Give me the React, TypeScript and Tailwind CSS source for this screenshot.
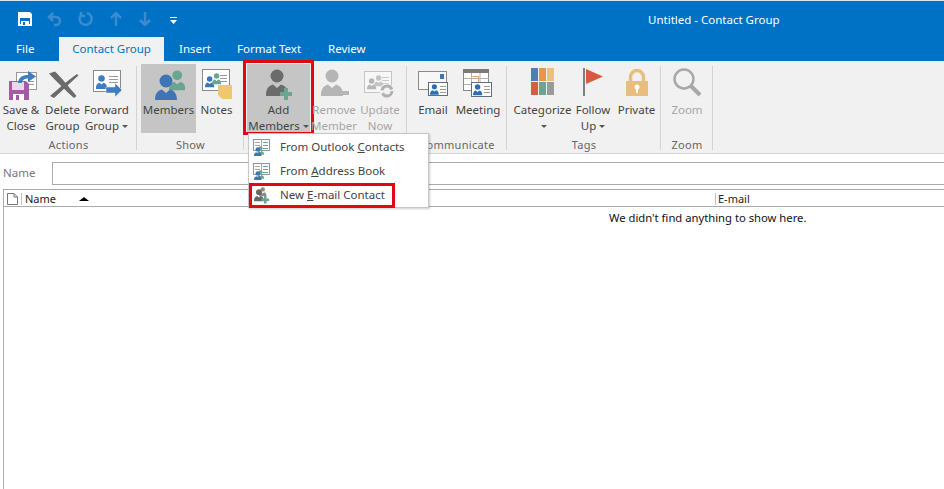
import type { ReactNode } from "react"

const font = { fontFamily: '"Noto Sans", "Open Sans", sans-serif' }

// head + shoulders in a box of 22x27
function Person({ x, y, s = 1, color }: { x: number; y: number; s?: number; color: string }) {
  return (
    <g transform={`translate(${x} ${y}) scale(${s})`} fill={color}>
      <circle cx="11" cy="7" r="6.5" />
      <path d="M0 27 C0 20 2 17 7 15.5 L11 19 L15 15.5 C20 17 22 20 22 27 Z" />
    </g>
  )
}

function Lines({ x, y, w, n = 3, color = "#9a9a9a" }: { x: number; y: number; w: number; n?: number; color?: string }) {
  return (
    <>
      {Array.from({ length: n }).map((_, i) => (
        <rect key={i} x={x} y={y + i * 3} width={w} height="1" fill={color} />
      ))}
    </>
  )
}

function Svg({ children }: { children: ReactNode }) {
  return (
    <svg width="32" height="32" viewBox="0 0 32 32" className="shrink-0">
      {children}
    </svg>
  )
}

const SaveClose = () => (
  <Svg>
    <rect x="13.5" y="4.5" width="20" height="17" fill="#fff" stroke="#9a9a9a" transform="translate(-2 0)" />
    <Lines x={23} y={13} w={6} n={2} />
    <path d="M4 13 H21 L24 16 V32 H4 Z" fill="#a45ca8" />
    <rect x="7" y="14" width="12" height="8" fill="#e9d8ea" />
    <rect x="8" y="26" width="11" height="6" fill="#fff" />
    <rect x="11" y="27" width="3" height="5" fill="#a45ca8" />
    <path d="M13 15 C13.5 9 18 7 23 7 V3 L31 8.5 L23 14 V10.5 C20 10.5 17.5 11.5 17 15 Z" fill="#3f7cc0" />
  </Svg>
)

const DeleteX = () => (
  <Svg>
    <path d="M2 5.5 L8 3.5 C14 9 22 19 29.5 28 L27 30 C20 24 9 13 2 5.5 Z" fill="#6b6b6b" />
    <path d="M30 6 L31.5 7.5 C24 14 15 23 7 30 L3 28 C10 22 21 12 30 6 Z" fill="#6b6b6b" />
  </Svg>
)

const Forward = () => (
  <Svg>
    <rect x="2.5" y="2.5" width="27" height="21" fill="#fff" stroke="#8a8a8a" />
    <Person x={5} y={7} s={0.5} color="#3f7cc0" />
    <rect x="5" y="18" width="11" height="3" fill="#3f7cc0" />
    <Lines x={18} y={8} w={9} />
    <path d="M15 19 H24 V15 L31 22 L24 29 V25 H15 Z" fill="#3f7cc0" stroke="#f1f1f1" strokeWidth="0.5" />
  </Svg>
)

const Members = () => (
  <Svg>
    <Person x={16} y={2} s={0.75} color="#6aa58f" />
    <Person x={2} y={6} s={1} color="#3f74b5" />
  </Svg>
)

const Notes = () => (
  <Svg>
    <rect x="1.5" y="1.5" width="27" height="21" fill="#fff" stroke="#8a8a8a" />
    <Person x={4} y={8} s={0.42} color="#3f74b5" />
    <Person x={11} y={5} s={0.42} color="#6aa58f" />
    <Lines x={19} y={7} w={7} />
    <path d="M17 17 H31 V31 H21 L17 27 Z" fill="#efc76e" />
  </Svg>
)

const AddMember = () => (
  <Svg>
    <Person x={3} y={1} color="#6b6b6b" />
    <path d="M21 20 H25 V24 H29 V28 H25 V32 H21 V28 H17 V24 H21 Z" fill="#6aa58f" />
  </Svg>
)

const RemoveMember = () => (
  <Svg>
    <Person x={3} y={1} color="#b5b5b5" />
    <rect x="17" y="23" width="14" height="4" fill="#b5b5b5" />
  </Svg>
)

const UpdateNow = () => (
  <Svg>
    <rect x="0.5" y="3.5" width="27" height="21" fill="#f7f7f7" stroke="#c4c4c4" />
    <Person x={3} y={10} s={0.42} color="#b5b5b5" />
    <Person x={10} y={7} s={0.42} color="#c4c4c4" />
    <Lines x={18} y={9} w={7} color="#c9c9c9" />
    <circle cx="23" cy="23" r="7.5" fill="#f1f1f1" />
    <circle cx="23" cy="23" r="5" fill="none" stroke="#b0b0b0" strokeWidth="3" strokeDasharray="13 3" />
  </Svg>
)

const Email = () => (
  <Svg>
    <rect x="1.5" y="3.5" width="28" height="18" fill="#f7f7f7" stroke="#8a8a8a" />
    <rect x="23" y="6" width="4" height="5" fill="#3f74b5" />
    <rect x="11.5" y="14.5" width="19" height="13" fill="#fff" stroke="#5f6f80" />
    <Person x={13} y={16} s={0.4} color="#2f6db0" />
    <Lines x={23} y={18} w={6} />
  </Svg>
)

const Meeting = () => (
  <Svg>
    <rect x="1.5" y="1.5" width="25" height="21" fill="#fff" stroke="#8a8a8a" />
    <rect x="1" y="1" width="26" height="4" fill="#7a7a7a" />
    <path d="M9.5 5 V22 M18 5 V14 M2 10.5 H27 M2 16.5 H9" stroke="#b0b0b0" fill="none" />
    <rect x="9.5" y="8.5" width="7" height="6" fill="none" stroke="#e8a56f" />
    <rect x="9.5" y="14.5" width="20" height="14" fill="#fff" stroke="#5f6f80" />
    <Person x={11} y={16} s={0.42} color="#2f6db0" />
    <Lines x={22} y={18} w={6} />
  </Svg>
)

const Categorize = () => (
  <Svg>
    <rect x="4" y="0" width="7" height="13" fill="#4c7fb8" />
    <rect x="12" y="0" width="7" height="13" fill="#e8964b" />
    <rect x="20" y="0" width="7" height="13" fill="#e9c27d" />
    <rect x="4" y="14" width="7" height="13" fill="#d85c44" />
    <rect x="12" y="14" width="7" height="13" fill="#6aa58f" />
    <rect x="20" y="14" width="7" height="13" fill="#9a9a9a" />
  </Svg>
)

const Flag = () => (
  <Svg>
    <rect x="6" y="0" width="2" height="28" fill="#7f7f7f" />
    <path d="M9 1 L26 8.5 L9 16 Z" fill="#d95b3f" />
  </Svg>
)

const Lock = () => (
  <Svg>
    <path d="M9.5 14 V9 a6.5 6.5 0 0 1 13 0 V14" fill="none" stroke="#e9bd7c" strokeWidth="3.5" />
    <path d="M5 13 H27 V28 H5 Z" fill="#e9bd7c" />
    <circle cx="16" cy="19" r="2.5" fill="#fff" />
    <rect x="15" y="20" width="2" height="5" fill="#fff" />
  </Svg>
)

const Magnifier = () => (
  <Svg>
    <circle cx="13" cy="11" r="9.5" fill="none" stroke="#a8a8a8" strokeWidth="2.5" />
    <path d="M20 18 L29 27" stroke="#a8a8a8" strokeWidth="4" />
  </Svg>
)

function Caret() {
  return <span className="inline-block ml-[3px] align-middle w-0 h-0 border-x-[3px] border-x-transparent border-t-[3px] border-t-[#555]" />
}

function RibbonButton({
  icon,
  lines,
  width,
  caret,
  caretBelow,
  disabled,
  active,
  marked,
}: {
  icon: ReactNode
  lines: string[]
  width: string
  caret?: boolean
  caretBelow?: boolean
  disabled?: boolean
  active?: boolean
  marked?: boolean
}) {
  return (
    <div
      className={`relative shrink-0 h-[69px] flex flex-col items-center pt-[4px] text-[11.5px] leading-[16px] ${width} ${
        active ? "bg-[#c5c5c5]" : ""
      } ${disabled ? "text-[#a6a6a6]" : "text-[#444]"}`}
    >
      {icon}
      <div className="mt-[2px] text-center whitespace-nowrap">
        {lines.map((l, i) => (
          <div key={i}>
            {l}
            {caret && i === lines.length - 1 && <Caret />}
          </div>
        ))}
        {caretBelow && (
          <div>
            <Caret />
          </div>
        )}
      </div>
      {marked && <div className="absolute -inset-x-[4px] -top-[4px] -bottom-[2px] border-[3px] border-[#e30613]" />}
    </div>
  )
}

function Group({ label, width, pad, children }: { label: string; width: string; pad: string; children: ReactNode }) {
  return (
    <div className={`relative shrink-0 h-full ${width}`}>
      <div className={`flex pt-[3px] ${pad}`}>{children}</div>
      <div className="absolute inset-x-0 top-[76px] text-center text-[11px] leading-[16px] tracking-[0.3px] text-[#666]">{label}</div>
      <div className="absolute right-0 top-[5px] bottom-[3px] w-px bg-[#d4d4d4]" />
    </div>
  )
}

function MenuItem({ icon, before, u, after, marked }: { icon: ReactNode; before: string; u: string; after: string; marked?: boolean }) {
  return (
    <div className="relative h-[24px] flex items-center text-[11.5px] text-[#444] whitespace-nowrap">
      <div className="w-[31px] pl-[4px] shrink-0">{icon}</div>
      <span>
        {before}
        <span className="underline">{u}</span>
        {after}
      </span>
      {marked && <div className="absolute left-0 top-0 -bottom-px w-[146px] border-[3px] border-[#e30613]" />}
    </div>
  )
}

const BookIcon = () => (
  <svg width="18" height="18" viewBox="0 0 18 18" className="block">
    <rect x="0.5" y="1.5" width="16" height="11" fill="#fff" stroke="#8a9aa5" />
    <path d="M8.5 2 V12" stroke="#a0b0b8" />
    <Lines x={2} y={4} w={5} color="#c79a8a" n={2} />
    <Lines x={10} y={4} w={5} color="#6aa58f" />
    <Person x={4} y={8} s={0.32} color="#6aa58f" />
    <Person x={1} y={9} s={0.34} color="#3f74b5" />
  </svg>
)

const NewContactIcon = () => (
  <svg width="18" height="18" viewBox="0 0 18 18" className="block">
    <Person x={6} y={1} s={0.34} color="#8a8a8a" />
    <Person x={1} y={3} s={0.45} color="#666" />
    <path d="M11 10 H13.5 V12.5 H16 V15 H13.5 V17.5 H11 V15 H8.5 V12.5 H11 Z" fill="#6aa58f" />
  </svg>
)

const qatDim = "#3b8ccf"

export default function App() {
  return (
    <div className="w-[944px] h-[489px] overflow-hidden bg-white" style={font}>
      {/* title bar */}
      <div className="h-[37px] bg-[#0072c6] border-t border-[#dbe8f3] flex items-center relative">
        <div className="flex items-center pl-[17px] gap-[13px]">
          <svg width="16" height="16" viewBox="0 0 16 16">
            <path d="M2 2 H12.5 L14 3.5 V14 H2 Z" fill="none" stroke="#fff" strokeWidth="2" />
            <rect x="2" y="2" width="12" height="5" fill="#fff" />
            <rect x="4" y="10" width="8" height="4" fill="#fff" />
            <rect x="6" y="11" width="2" height="3" fill="#0072c6" />
          </svg>
          <svg width="17" height="16" viewBox="0 0 17 16" fill="none" stroke={qatDim} strokeWidth="2.5">
            <path d="M7 2 L3 6 L7 10 M3 6 H10 A4 4 0 0 1 10 14 H8" />
          </svg>
          <svg width="16" height="16" viewBox="0 0 16 16" fill="none" stroke={qatDim} strokeWidth="2.5" className="ml-[1px]">
            <path d="M10 2 A6 6 0 1 1 4 4 M4 1 V5 H8" />
          </svg>
          <svg width="12" height="14" viewBox="0 0 12 14" fill="none" stroke={qatDim} strokeWidth="2.5" className="ml-[4px]">
            <path d="M6 14 V2 M1 6 L6 1 L11 6" />
          </svg>
          <svg width="12" height="14" viewBox="0 0 12 14" fill="none" stroke={qatDim} strokeWidth="2.5" className="ml-[4px]">
            <path d="M6 0 V12 M1 8 L6 13 L11 8" />
          </svg>
          <svg width="7" height="7" viewBox="0 0 7 7" fill="#fff" className="ml-[6px] mt-[2px]">
            <rect x="0" y="0" width="7" height="1" />
            <path d="M0 3 H7 L3.5 7 Z" />
          </svg>
        </div>
        <div className="absolute left-[648px] top-[11px] text-[11.5px] leading-[16px] text-white whitespace-nowrap">Untitled - Contact Group</div>
      </div>

      {/* tabs */}
      <div className="h-[24px] bg-[#0072c6] flex text-[11.5px] text-white leading-[24px] whitespace-nowrap">
        <div className="ml-[16px] w-[43px]">File</div>
        <div className="w-[105px] bg-[#f1f1f1] text-[#0072c6] text-center">Contact Group</div>
        <div className="ml-[15px] w-[58px]">Insert</div>
        <div className="w-[91px]">Format Text</div>
        <div>Review</div>
      </div>

      {/* ribbon */}
      <div className="h-[93px] bg-[#f1f1f1] border-b border-[#d5d5d5] flex">
        <Group label="Actions" width="w-[137px]" pad="pl-[0px]">
          <RibbonButton icon={<SaveClose />} lines={["Save &", "Close"]} width="w-[42px]" />
          <RibbonButton icon={<DeleteX />} lines={["Delete", "Group"]} width="w-[41px]" />
          <RibbonButton icon={<Forward />} lines={["Forward", "Group"]} caret width="w-[47px]" />
        </Group>
        <Group label="Show" width="w-[107px]" pad="pl-[4px]">
          <RibbonButton icon={<Members />} lines={["Members"]} active width="w-[55px]" />
          <RibbonButton icon={<Notes />} lines={["Notes"]} width="w-[41px]" />
        </Group>
        <div className="relative shrink-0">
          <Group label="" width="w-[163px]" pad="pl-[3px]">
            <RibbonButton icon={<AddMember />} lines={["Add", "Members"]} caret active marked width="w-[63px]" />
            <RibbonButton icon={<RemoveMember />} lines={["Remove", "Member"]} disabled width="w-[48px]" />
            <RibbonButton icon={<UpdateNow />} lines={["Update", "Now"]} disabled width="w-[44px]" />
          </Group>
          <div className="absolute left-[4px] top-[72px] w-[181px] h-[75px] bg-white border border-[#c6c6c6] shadow-[1px_1px_2px_rgba(0,0,0,0.2)] z-10 pt-px">
            <MenuItem icon={<BookIcon />} before="From Outlook " u="C" after="ontacts" />
            <MenuItem icon={<BookIcon />} before="From " u="A" after="ddress Book" />
            <MenuItem icon={<NewContactIcon />} before="New " u="E" after="-mail Contact" marked />
          </div>
        </div>
        <Group label="Communicate" width="w-[100px]" pad="pl-[5px]">
          <RibbonButton icon={<Email />} lines={["Email"]} width="w-[42px]" />
          <RibbonButton icon={<Meeting />} lines={["Meeting"]} width="w-[48px]" />
        </Group>
        <Group label="Tags" width="w-[154px]" pad="pl-[6px]">
          <RibbonButton icon={<Categorize />} lines={["Categorize"]} caretBelow width="w-[59px]" />
          <RibbonButton icon={<Flag />} lines={["Follow", "Up"]} caret width="w-[42px]" />
          <RibbonButton icon={<Lock />} lines={["Private"]} width="w-[45px]" />
        </Group>
        <Group label="Zoom" width="w-[52px]" pad="pl-[5px]">
          <RibbonButton icon={<Magnifier />} lines={["Zoom"]} disabled width="w-[42px]" />
        </Group>
      </div>

      {/* name field */}
      <div className="h-[35px] flex items-start pl-[3px] text-[11.5px] text-[#777]">
        <div className="w-[49px] pt-[11px] leading-[16px]">Name</div>
        <div className="flex-1 mt-[8px] h-[23px] border-y border-l border-[#ababab]" />
      </div>

      {/* list */}
      <div className="ml-[3px] h-[300px] border-l border-[#ababab]">
        <div className="h-[18px] border-y border-[#ababab] flex items-center text-[11px] leading-[17px] pt-[1px] text-[#222]">
          <svg width="11" height="12" viewBox="0 0 11 12" className="ml-[3px] shrink-0">
            <path d="M0.5 0.5 H7 L10.5 4 V11.5 H0.5 Z M7 0.5 V4 H10.5" fill="#fff" stroke="#777" />
          </svg>
          <div className="ml-[3px] w-px h-[12px] bg-[#c0c0c0]" />
          <div className="ml-[3px] w-[54px]">Name</div>
          <div className="w-0 h-0 border-x-[5px] border-x-transparent border-b-[4px] border-b-black" />
          <div className="ml-[626px] w-px h-[12px] bg-[#c0c0c0]" />
          <div className="ml-[2px]">E-mail</div>
        </div>
        <div className="pl-[605px] pt-[3px] text-[11.25px] leading-[16px] text-[#111]">We didn't find anything to show here.</div>
      </div>
    </div>
  )
}
